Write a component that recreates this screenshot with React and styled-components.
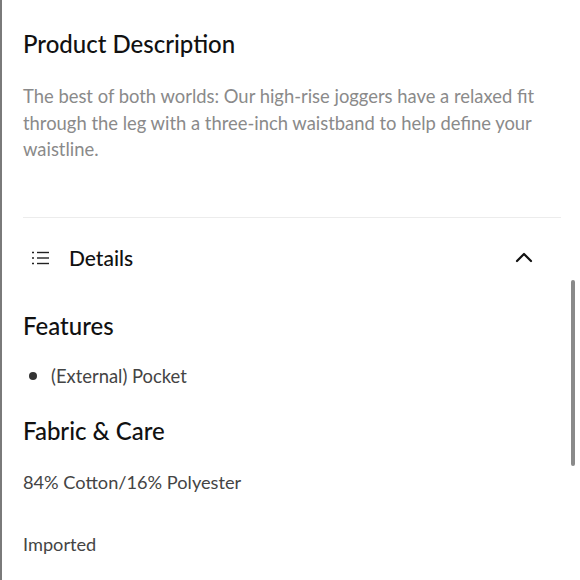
import React from "react";
import styled, { createGlobalStyle } from "styled-components";

const Global = createGlobalStyle`
  html, body { margin: 0; padding: 0; background: #fff; }
  body { font-family: "Lato", "Liberation Sans", sans-serif; }
`;

const Panel = styled.div`
  position: relative;
  width: 580px;
  height: 580px;
  box-sizing: border-box;
  border-left: 2px solid #7a7a7a;
  overflow: hidden;
  padding: 0 19px 0 21px;
`;

const Section = styled.section`
  padding-top: 29px;
  padding-bottom: 54px;
  border-bottom: 1px solid #ececec;
`;

const Heading = styled.h2`
  margin: ${(p) => p.$top || 0}px 0 0;
  font-size: 24px;
  font-weight: 500;
  color: #111;
  line-height: 30px;
`;

const Para = styled.p`
  margin: 24px 0 0;
  font-size: 18.4px;
  line-height: 26.5px;
  color: #8a8a8a;
`;

const AccordionHeader = styled.div`
  display: flex;
  align-items: center;
  height: 30px;
  margin-top: 25px;
  padding-left: 8px;
  padding-right: 28px;
`;

const HeaderLabel = styled.span`
  flex: 1;
  margin-left: 19px;
  font-size: 21px;
  font-weight: 500;
  color: #111;
`;

const Body = styled.div`
  padding-top: 38px;
`;

const BulletList = styled.ul`
  list-style: none;
  margin: 23px 0 0;
  padding: 0;
`;

const Bullet = styled.li`
  display: flex;
  align-items: center;
  font-size: 18.4px;
  line-height: 24px;
  color: #444;
  &::before {
    content: "";
    width: 8px;
    height: 8px;
    border-radius: 50%;
    background: #333;
    margin-left: 6px;
    margin-right: 14px;
  }
`;

const Line = styled.p`
  margin: ${(p) => p.$top}px 0 0;
  font-size: 18.2px;
  line-height: 24px;
  color: #444;
`;

const Scrollbar = styled.div`
  position: absolute;
  right: 5px;
  top: 280px;
  width: 4px;
  height: 186px;
  border-radius: 2px;
  background: #8a8a8a;
`;

const ListIcon = () => (
  <svg width="19" height="14" viewBox="0 0 19 14" fill="none" stroke="#222" strokeWidth="1.4">
    <line x1="1" y1="1.5" x2="3" y2="1.5" />
    <line x1="6" y1="1.5" x2="18" y2="1.5" />
    <line x1="1" y1="7" x2="3" y2="7" />
    <line x1="6" y1="7" x2="18" y2="7" />
    <line x1="1" y1="12.5" x2="3" y2="12.5" />
    <line x1="6" y1="12.5" x2="18" y2="12.5" />
  </svg>
);

const Chevron = () => (
  <svg width="18" height="11" viewBox="0 0 18 11" fill="none" stroke="#111" strokeWidth="2.2" strokeLinecap="round" strokeLinejoin="round">
    <polyline points="2,9 9,2 16,9" />
  </svg>
);

export default function App() {
  return (
    <>
      <Global />
      <Panel>
        <Section>
          <Heading>Product Description</Heading>
          <Para>
            The best of both worlds: Our high-rise joggers have a relaxed fit
            through the leg with a three-inch waistband to help define your
            waistline.
          </Para>
        </Section>
        <AccordionHeader>
          <ListIcon />
          <HeaderLabel>Details</HeaderLabel>
          <Chevron />
        </AccordionHeader>
        <Body>
          <Heading>Features</Heading>
          <BulletList>
            <Bullet>(External) Pocket</Bullet>
          </BulletList>
          <Heading $top={28}>Fabric &amp; Care</Heading>
          <Line $top={24}>84% Cotton/16% Polyester</Line>
          <Line $top={38}>Imported</Line>
        </Body>
        <Scrollbar />
      </Panel>
    </>
  );
}
